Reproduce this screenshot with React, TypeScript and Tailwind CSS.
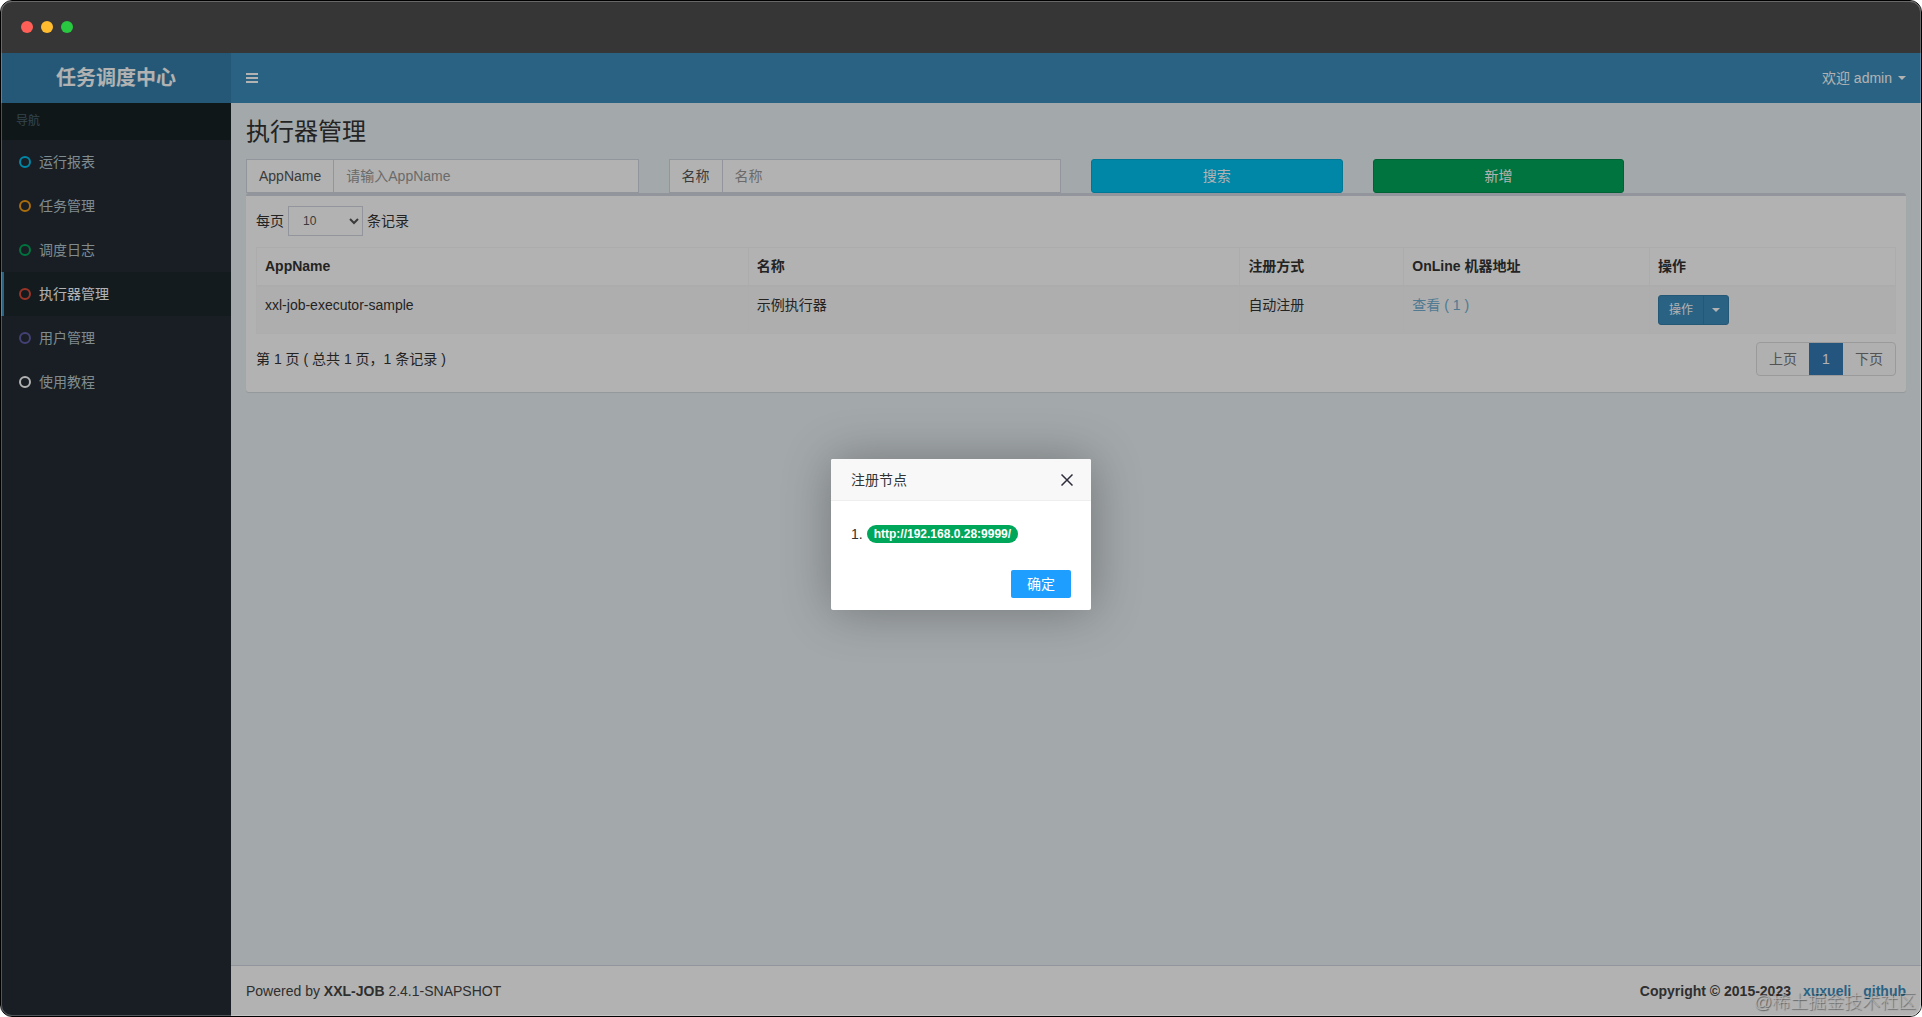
import { useState } from "react";
import clsx from "clsx";

const menus = [
  { name: "运行报表", color: "text-[#00c0ef]" },
  { name: "任务管理", color: "text-[#f39c12]" },
  { name: "调度日志", color: "text-[#00a65a]" },
  { name: "执行器管理", color: "text-[#dd4b39]" },
  { name: "用户管理", color: "text-[#605ca8]" },
  { name: "使用教程", color: "text-[#ffffff]" },
];

const executors = [
  {
    appName: "xxl-job-executor-sample",
    title: "示例执行器",
    type: "自动注册",
    nodes: ["http://192.168.0.28:9999/"],
  },
];

const Caret = () => (
  <svg width="8" height="4" viewBox="0 0 8 4" fill="currentColor" aria-hidden="true">
    <path d="M0 0h8L4 4z" />
  </svg>
);

const CircleIcon = ({ className }: { className: string }) => (
  <svg className={className} width="12" height="12" viewBox="0 0 12 12" fill="none" aria-hidden="true">
    <circle cx="6" cy="6" r="5" stroke="currentColor" strokeWidth="2" />
  </svg>
);

// 窗口标题栏
const TitleBar = () => (
  <div className="flex h-[52px] shrink-0 items-center gap-2 bg-[#363636] px-5">
    <span className="size-3 rounded-full bg-[#ff5f57]" />
    <span className="size-3 rounded-full bg-[#febc2e]" />
    <span className="size-3 rounded-full bg-[#28c840]" />
  </div>
);

const Header = () => (
  <header className="flex h-[50px] shrink-0 bg-[#3c8dbc] text-white">
    <a
      href="#"
      className="flex w-[230px] items-center justify-center bg-[#367fa9] text-xl font-bold"
    >
      任务调度中心
    </a>
    <nav className="flex flex-1 items-center justify-between px-[15px]">
      <button type="button" aria-label="切换导航">
        <svg width="12" height="10" viewBox="0 0 12 10" fill="currentColor" aria-hidden="true">
          <rect width="12" height="2" />
          <rect y="4" width="12" height="2" />
          <rect y="8" width="12" height="2" />
        </svg>
      </button>
      <button type="button" className="flex items-center gap-[6px]">
        欢迎 admin
        <Caret />
      </button>
    </nav>
  </header>
);

// 左侧导航
const Sidebar = () => (
  <aside className="w-[230px] shrink-0 bg-[#232c33]">
    <div className="h-[37px] bg-[#182225] px-[15px] py-[10px] text-xs leading-[17px] text-[#4b646f]">
      导航
    </div>
    <ul>
      {menus.map((item) => {
        const active = item.name === "执行器管理";
        return (
          <li key={item.name}>
            <a
              href="#"
              className={clsx(
                "flex h-11 items-center gap-2 border-l-[3px] pl-[15px]",
                active
                  ? "border-[#3c8dbc] bg-[#1e282c] text-white"
                  : "border-transparent text-[#b8c7ce]"
              )}
            >
              <CircleIcon className={item.color} />
              {item.name}
            </a>
          </li>
        );
      })}
    </ul>
  </aside>
);

interface FieldProps {
  id: string;
  label: string;
  placeholder: string;
}

const Field = ({ id, label, placeholder }: FieldProps) => (
  <div className="col-span-3 px-[15px]">
    <div className="flex h-[34px] border border-[#d2d6de] bg-white">
      <label
        htmlFor={id}
        className="flex items-center border-r border-[#d2d6de] px-3 text-[#555555]"
      >
        {label}
      </label>
      <input
        id={id}
        type="text"
        placeholder={placeholder}
        className="min-w-0 flex-1 px-3 text-[#555555] outline-none placeholder:text-[#999999]"
      />
    </div>
  </div>
);

const ExecutorTable = ({ onView }: { onView: () => void }) => (
  <table className="mt-[11px] w-full table-fixed border-collapse border border-[#f9f9f9] text-left">
    <thead>
      <tr>
        <th className="w-[30%] border border-b-2 border-[#f6f6f6] px-2 pt-2 pb-[9px]">AppName</th>
        <th className="w-[30%] border border-b-2 border-[#f6f6f6] px-2 pt-2 pb-[9px]">名称</th>
        <th className="w-[10%] border border-b-2 border-[#f6f6f6] px-2 pt-2 pb-[9px]">注册方式</th>
        <th className="w-[15%] border border-b-2 border-[#f6f6f6] px-2 pt-2 pb-[9px]">OnLine 机器地址</th>
        <th className="w-[15%] border border-b-2 border-[#f6f6f6] px-2 pt-2 pb-[9px]">操作</th>
      </tr>
    </thead>
    <tbody>
      {executors.map((row) => (
        <tr key={row.appName} className="bg-[#f9f9f9] align-top">
          <td className="border border-[#f8f8f8] p-2">{row.appName}</td>
          <td className="border border-[#f8f8f8] p-2">{row.title}</td>
          <td className="border border-[#f8f8f8] p-2">{row.type}</td>
          <td className="border border-[#f8f8f8] p-2">
            <button type="button" className="text-[#72afd2]" onClick={onView}>
              查看 ( {row.nodes.length} )
            </button>
          </td>
          <td className="border border-[#f8f8f8] p-2">
            <div className="flex h-[30px] w-fit overflow-hidden rounded-[3px] border border-[#367fa9] bg-[#3c8dbc] text-xs text-white">
              <button type="button" className="px-[10px]">
                操作
              </button>
              <button
                type="button"
                aria-label="更多操作"
                className="border-l border-[#367fa9] px-2"
              >
                <Caret />
              </button>
            </div>
          </td>
        </tr>
      ))}
    </tbody>
  </table>
);

const Pagination = () => (
  <div className="flex h-[34px] overflow-hidden rounded-[4px] border border-[#dddddd] bg-[#fdfdfd] text-[#777777]">
    <button type="button" className="px-3">
      上页
    </button>
    <button type="button" className="-my-px w-[34px] bg-[#337ab7] text-white">
      1
    </button>
    <button type="button" className="px-3">
      下页
    </button>
  </div>
);

// 注册节点弹窗
const NodeDialog = ({ nodes, onClose }: { nodes: string[]; onClose: () => void }) => (
  <div
    role="dialog"
    aria-label="注册节点"
    className="w-[260px] rounded-[2px] bg-white shadow-[1px_1px_50px_rgba(0,0,0,0.3)]"
  >
    <div className="flex h-[42px] items-center justify-between rounded-t-[2px] border-b border-[#eeeeee] bg-[#f8f8f8] pr-[18px] pl-5">
      <h2>注册节点</h2>
      <button type="button" aria-label="关闭" onClick={onClose}>
        <svg width="12" height="12" viewBox="0 0 12 12" stroke="#2e2d3c" strokeWidth="1.5" aria-hidden="true">
          <path d="M0.5 0.5l11 11M11.5 0.5l-11 11" />
        </svg>
      </button>
    </div>
    <ol className="px-5 pt-[21px] pb-6">
      {nodes.map((node, index) => (
        <li key={node} className="flex items-center gap-1 leading-[24px]">
          {index + 1}.
          <span className="rounded-full bg-[#00a65a] px-[7px] py-[3px] text-xs leading-[12px] font-bold text-white">
            {node}
          </span>
        </li>
      ))}
    </ol>
    <div className="flex justify-end px-5 pb-3">
      <button
        type="button"
        className="h-7 rounded-[2px] bg-[#1e9fff] px-4 text-white"
        onClick={onClose}
      >
        确定
      </button>
    </div>
  </div>
);

export default function App() {
  const [open, setOpen] = useState(true);

  return (
    <div className="relative flex h-screen flex-col overflow-hidden rounded-[12px] border border-black bg-[#eaf1f4] font-['Liberation_Sans','Noto_Sans_CJK_SC',sans-serif] text-[14px] leading-[20px] text-[#333333]">
      <TitleBar />

      <div className="relative flex min-h-0 flex-1 flex-col">
        <Header />
        <div className="flex min-h-0 flex-1">
          <Sidebar />
          <div className="flex min-w-0 flex-1 flex-col">
            <main className="flex-1 px-[15px] pt-4">
              <h1 className="text-2xl leading-[26px]">执行器管理</h1>

              <div className="-mx-[15px] mt-[14px] grid grid-cols-12">
                <Field id="appname" label="AppName" placeholder="请输入AppName" />
                <Field id="title" label="名称" placeholder="名称" />
                <div className="col-span-2 px-[15px]">
                  <button
                    type="button"
                    className="h-[34px] w-full rounded-[3px] border border-[#00acd6] bg-[#00c0ef] text-white"
                  >
                    搜索
                  </button>
                </div>
                <div className="col-span-2 px-[15px]">
                  <button
                    type="button"
                    className="h-[34px] w-full rounded-[3px] border border-[#008d4c] bg-[#00a65a] text-white"
                  >
                    新增
                  </button>
                </div>
              </div>

              <div className="rounded-[3px] border-t-[3px] border-[#d2d6de] bg-white p-[10px] shadow-[0_1px_1px_rgba(0,0,0,0.1)]">
                <div className="flex items-center gap-1">
                  <label htmlFor="length">每页</label>
                  <select
                    id="length"
                    defaultValue="10"
                    className="h-[30px] w-[75px] border border-[#d2d6de] bg-white px-[10px] text-xs text-[#555555]"
                  >
                    <option>10</option>
                    <option>20</option>
                    <option>50</option>
                  </select>
                  <span>条记录</span>
                </div>

                <ExecutorTable onView={() => setOpen(true)} />

                <div className="flex items-center justify-between pt-2 pb-[6px]">
                  <p>第 1 页 ( 总共 1 页，1 条记录 )</p>
                  <Pagination />
                </div>
              </div>
            </main>

            <footer className="flex justify-between border-t border-[#d2d6de] bg-white p-[15px] text-[#444444]">
              <p>
                Powered by <b>XXL-JOB</b> 2.4.1-SNAPSHOT
              </p>
              <div className="flex gap-3 font-bold">
                <span>Copyright © 2015-2023</span>
                <a href="#" className="text-[#3c8dbc]">
                  xuxueli
                </a>
                <a href="#" className="text-[#3c8dbc]">
                  github
                </a>
              </div>
            </footer>
          </div>
        </div>

        {open && (
          <div className="absolute inset-0 flex items-center justify-center bg-black/30">
            <NodeDialog nodes={executors[0].nodes} onClose={() => setOpen(false)} />
          </div>
        )}
      </div>

      {/* 窗口内侧高光 */}
      <div className="pointer-events-none absolute inset-0 rounded-[11px] border border-white/25" />
      <span className="pointer-events-none absolute right-[5px] bottom-0 text-lg font-light text-[#b8b8b8]/80 [text-shadow:1px_1px_1px_rgba(0,0,0,0.45)]">
        @稀土掘金技术社区
      </span>
    </div>
  );
}
